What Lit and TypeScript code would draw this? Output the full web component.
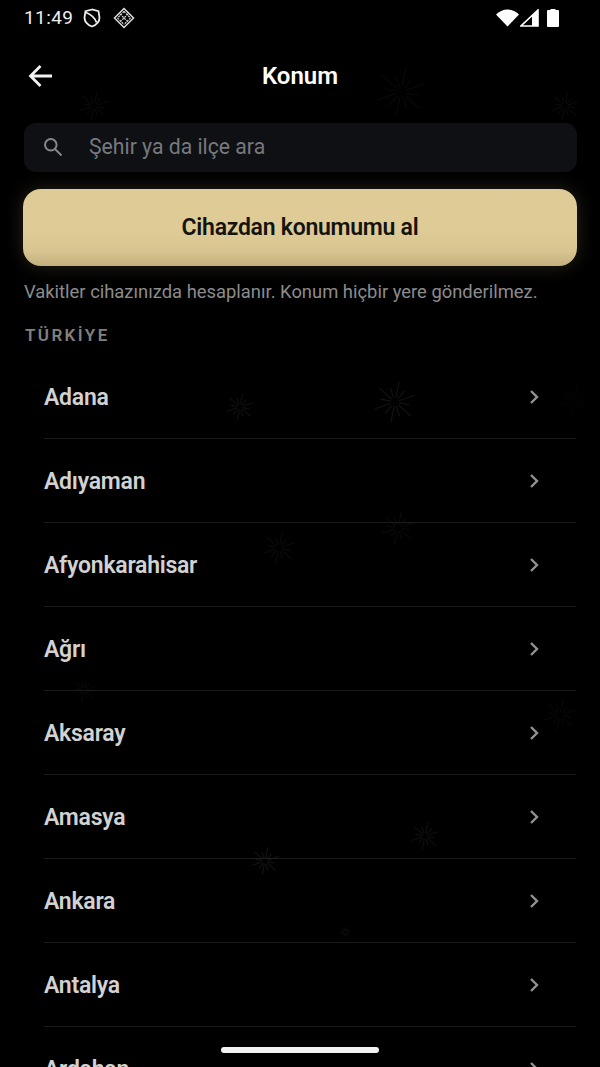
import { LitElement, html, css, svg } from "lit";
import { customElement } from "lit/decorators.js";

const CITIES = [
  "Adana",
  "Adıyaman",
  "Afyonkarahisar",
  "Ağrı",
  "Aksaray",
  "Amasya",
  "Ankara",
  "Antalya",
  "Ardahan",
];

// faint stars behind the list: x, y, radius, opacity
const STARS: [number, number, number, number][] = [
  [94, 106, 15, 0.04],
  [401, 92, 25, 0.035],
  [565, 106, 14, 0.04],
  [240, 407, 14, 0.06],
  [395, 402, 21, 0.07],
  [398, 528, 17, 0.04],
  [279, 548, 17, 0.04],
  [84, 690, 12, 0.03],
  [560, 715, 16, 0.03],
  [425, 836, 14, 0.06],
  [265, 861, 14, 0.07],
  [345, 932, 6, 0.03],
  [575, 400, 14, 0.02],
];

function star(x: number, y: number, r: number, o: number) {
  const arms = Array.from({ length: 12 }, (_, i) => {
    const a = (i * Math.PI) / 6 + 0.2;
    const len = i % 2 ? r : r * 0.7;
    const inner = r * 0.2;
    return `M${(x + Math.cos(a) * inner).toFixed(1)} ${(y + Math.sin(a) * inner).toFixed(1)}L${(x + Math.cos(a) * len).toFixed(1)} ${(y + Math.sin(a) * len).toFixed(1)}`;
  }).join("");
  return svg`<path d=${arms} stroke="#fff" stroke-opacity=${o} stroke-width="1.2" fill="none"/>`;
}

@customElement("app-root")
export class AppRoot extends LitElement {
  static styles = css`
    :host {
      display: block;
      position: relative;
      width: 600px;
      height: 1067px;
      overflow: hidden;
      background: #000;
      color: #fff;
      font-family: Roboto, "Noto Sans", sans-serif;
    }

    .sky {
      position: absolute;
      inset: 0;
      width: 600px;
      height: 1067px;
      filter: blur(0.6px);
    }

    .page {
      position: relative;
      display: flex;
      flex-direction: column;
    }

    /* status bar */
    .status {
      height: 35px;
      padding: 0 24px;
      display: flex;
      align-items: center;
      gap: 7px;
      color: #eee;
    }
    .time {
      font-size: 19px;
      letter-spacing: 0.4px;
    }
    .status .gap {
      flex: 1;
    }
    .status svg {
      display: block;
    }
    .shield {
      margin-left: 2px;
    }
    .grid {
      margin-left: 4px;
    }
    .sys {
      display: flex;
      align-items: center;
      gap: 1px;
      margin-right: 17px;
    }
    .battery {
      margin-left: 7px;
    }

    /* top bar */
    .bar {
      height: 82px;
      padding: 0 24px;
      display: flex;
      align-items: center;
      justify-content: center;
      position: relative;
    }
    .bar h1 {
      margin: 0;
      font-size: 24px;
      font-weight: 600;
      letter-spacing: 0;
    }
    .back {
      position: absolute;
      left: 26px;
      top: 26px;
    }

    .top {
      padding: 6px 23px 0 24px;
      display: flex;
      flex-direction: column;
    }

    .search {
      height: 49px;
      box-sizing: border-box;
      padding: 0 18px 0 19px;
      display: flex;
      align-items: center;
      gap: 26px;
      background: #0e1014;
      border-radius: 12px;
      color: #77797d;
      font-size: 21.2px;
    }
    .search span {
      margin-bottom: 2px;
    }
    .search svg {
      margin-bottom: 2px;
    }

    .locate {
      margin: 17px 0 0 -1px;
      height: 77px;
      border-radius: 18px;
      background: linear-gradient(180deg, #decb97 0%, #dfcb96 50%, #d8c590 80%, #c2b07f 100%);
      box-shadow: 0 0 18px rgba(223, 203, 150, 0.18);
      color: #15130e;
      font-size: 23px;
      font-weight: 600;
      letter-spacing: -0.26px;
      display: flex;
      align-items: center;
      justify-content: center;
    }

    .hint {
      margin: 14px 0 0;
      font-size: 18.4px;
      line-height: 24px;
      color: #8c8c8c;
      white-space: nowrap;
    }

    .section {
      margin: 19px 0 0 1px;
      font-size: 17px;
      line-height: 24px;
      font-weight: 600;
      letter-spacing: 2.4px;
      color: #808080;
    }

    .list {
      margin: 8px 24px 0 44px;
      padding: 0;
      list-style: none;
    }
    .list li {
      height: 83px;
      padding-right: 37px;
      display: flex;
      align-items: center;
      justify-content: space-between;
      border-bottom: 1px solid #1c1c1c;
      font-size: 23px;
      font-weight: 600;
      letter-spacing: -0.25px;
      color: #d2d2d2;
    }
    .list li span {
      margin-top: 2px;
    }

    .home {
      position: absolute;
      left: 221px;
      top: 1047px;
      width: 158px;
      height: 6px;
      border-radius: 3px;
      background: #f2f2f2;
    }
  `;

  render() {
    return html`
      <svg class="sky" viewBox="0 0 600 1067">
        ${STARS.map(([x, y, r, o]) => star(x, y, r, o))}
      </svg>
      <div class="page">
        <div class="status">
          <span class="time">11:49</span>
          <svg class="shield" width="20" height="20" viewBox="0 0 20 20" fill="none" stroke="#eee" stroke-width="1.800">
            <path d="M10 1.500 3.500 3.200 2.500 9.600c0 4.200 3.200 7.400 7.500 8.900 4.300-1.500 7.500-4.700 7.500-8.900L16.500 3.200z"/>
            <path d="M4 4.500C9 6.500 13 10 14.500 14.500"/>
          </svg>
          <svg class="grid" width="22" height="22" viewBox="0 0 22 22" fill="none" stroke="#ddd">
            <path d="M11 1.500 20.500 11 11 20.500 1.500 11z" stroke-width="1.500"/>
            <path d="M7 7l8 8M11 4.500l6.500 6.500M4.500 11l6.500 6.500M15 7l-8 8M11 4.500 4.500 11M17.500 11 11 17.500" stroke-width="1.200" stroke-dasharray="2 1"/>
          </svg>
          <span class="gap"></span>
          <div class="sys">
            <svg width="23" height="18" viewBox="0 0 23 18"><path d="M0 5.500C3 2.500 7 .5 11.500.5S20 2.500 23 5.500L11.500 17.500z" fill="#fff"/></svg>
            <svg width="19" height="18" viewBox="0 0 19 18">
              <path d="M18 1v16H1z" fill="none" stroke="#fff" stroke-width="1.600"/>
              <path d="M18 1v16h-6V7z" fill="#fff"/>
            </svg>
            <svg class="battery" width="12" height="18" viewBox="0 0 12 18"><path d="M3.500 1V0h5v1H11a1 1 0 0 1 1 1v15a1 1 0 0 1-1 1H1a1 1 0 0 1-1-1V2a1 1 0 0 1 1-1z" fill="#fff"/></svg>
          </div>
        </div>

        <header class="bar">
          <svg class="back" width="30" height="30" viewBox="0 0 30 30" fill="none" stroke="#f2f2f2" stroke-width="2.800">
            <path d="M26 15H5M14.500 5 4.500 15l10 10"/>
          </svg>
          <h1>Konum</h1>
        </header>

        <div class="top">
          <div class="search">
            <svg width="20" height="20" viewBox="0 0 20 20" fill="none" stroke="#85878b" stroke-width="2">
              <circle cx="7.800" cy="7.800" r="5.800"/>
              <path d="M12 12l6.500 6.500"/>
            </svg>
            <span>Şehir ya da ilçe ara</span>
          </div>
          <div class="locate">Cihazdan konumumu al</div>
          <p class="hint">Vakitler cihazınızda hesaplanır. Konum hiçbir yere gönderilmez.</p>
          <div class="section">TÜRKİYE</div>
        </div>

        <ul class="list">
          ${CITIES.map(
            (c) => html`<li>
              <span>${c}</span>
              <svg width="10" height="16" viewBox="0 0 10 16" fill="none" stroke="#929292" stroke-width="2.400">
                <path d="M2 2l6 6-6 6"/>
              </svg>
            </li>`,
          )}
        </ul>
      </div>
      <div class="home"></div>
    `;
  }
}
